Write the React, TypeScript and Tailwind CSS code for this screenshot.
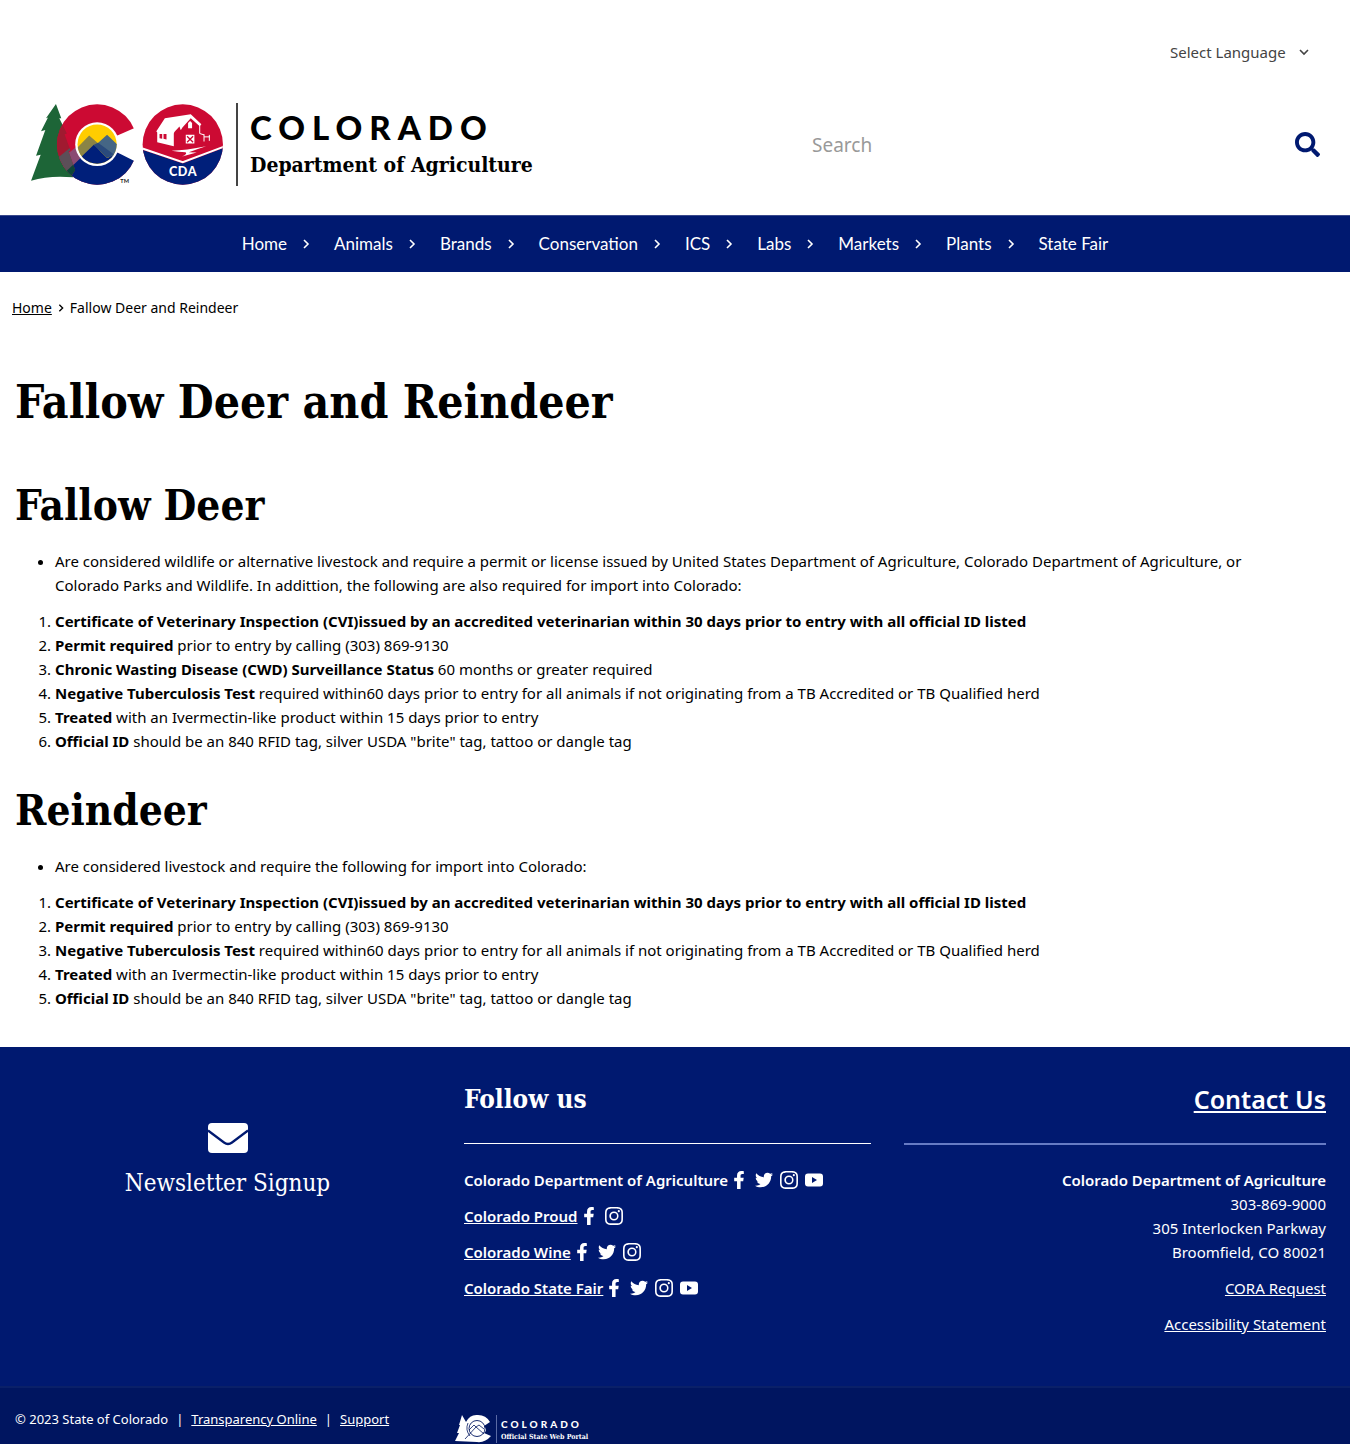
import { FaFacebookF, FaSearch, FaTwitter } from "react-icons/fa";
import { BsInstagram } from "react-icons/bs";

const sans = "font-['Noto_Sans',sans-serif]";
const slab = "font-['DejaVu_Serif_Condensed','DejaVu_Serif',serif]";

function Chevron({ className }: { className: string }) {
  return (
    <svg viewBox="0 0 12 12" className={className} fill="none" stroke="currentColor" strokeWidth="1.6" aria-hidden="true">
      <path d="M4 2l4 4-4 4" />
    </svg>
  );
}

function StateMark() {
  return (
    <svg viewBox="30 38 584 250" className="h-[83px] w-[194px]" role="img" aria-label="Colorado Department of Agriculture emblem">
      <defs>
        <clipPath id="ring">
          <circle cx="232" cy="163" r="121" />
        </clipPath>
        <clipPath id="center">
          <circle cx="232" cy="162" r="59" />
        </clipPath>
        <clipPath id="seal">
          <circle cx="490" cy="163" r="121" />
        </clipPath>
        <clipPath id="tree">
          <path d="M108 41L124 84L118 84L141 130L134 132L152 182L146 184L166 240L152 262Q90 255 33 272L62 194L48 197L76 119L63 123L84 82L78 84z" />
        </clipPath>
      </defs>
      <path d="M108 41L124 84L118 84L141 130L134 132L152 182L146 184L160 262Q90 255 33 272L62 194L48 197L76 119L63 123L84 82L78 84z" fill="#1d6537" />
      <g clipPath="url(#ring)">
        <rect x="100" y="30" width="260" height="270" fill="#cc0a33" />
        <path d="M105 222L182 160L222 150L350 190V300H110z" fill="#8a4a72" />
        <path d="M134 250L222 165L300 190L360 200V300H110z" fill="#001f7a" />
      </g>
      <g clipPath="url(#tree)">
        <g clipPath="url(#ring)">
          <rect x="100" y="30" width="80" height="260" fill="#a01a30" />
          <path d="M105 210L160 165V300H100z" fill="#5c4f58" />
          <path d="M120 262L170 214V300H110z" fill="#0d4638" />
        </g>
      </g>
      <path d="M232 162L300 133L362 106V222L295 188z" fill="#fff" />
      <circle cx="232" cy="162" r="66" fill="#fff" />
      <g clipPath="url(#center)">
        <rect x="170" y="100" width="124" height="124" fill="#ffcd00" />
        <path d="M150 196L208 136L240 164L200 240z" fill="#8a8446" />
        <path d="M222 170L262 134L306 176V225z" fill="#456685" />
        <path d="M160 224L222 164L262 204L300 188V240H160z" fill="#001f7a" />
        <path d="M222 164L235 158L282 192L262 204z" fill="#2a4a7c" />
      </g>
      <text x="302" y="280" fontSize="17" className="font-['Lato',sans-serif] font-bold" fill="#222">TM</text>
      <g clipPath="url(#seal)">
        <rect x="365" y="38" width="250" height="250" fill="#cc0a33" />
        <path d="M365 178L490 220L615 173V290H365z" fill="#001f7a" />
        <path d="M365 174L490 216L615 169" fill="none" stroke="#fff" strokeWidth="6" />
      </g>
      <path d="M410 124L436 84L514 72L546 102L541 108L514 84L489 112L484 120L480 109L466 124L462 130L415 127z" fill="#fff" />
      <path d="M413 122L463 126V168L413 156z" fill="#fff" />
      <path d="M420 131h8v15l-8-2zM432 131h9v17l-9-2z" fill="#cc0a33" />
      <path d="M506 98l6-6 6 6v16h-12zM499 134h26v26h-26z" fill="#fff" />
      <path d="M503 138l18 18M521 138l-18 18" stroke="#cc0a33" strokeWidth="4" />
      <path d="M541 104V130L554 134M554 132V154M570 134V152M554 140H572" fill="none" stroke="#fff" strokeWidth="3" />
      <path d="M456 182Q500 180 560 168Q530 178 508 186L532 187L488 199Q506 190 498 186Q478 186 456 182z" fill="#fff" />
      <text x="491" y="257" textAnchor="middle" fontSize="38" letterSpacing="2" className="font-['Lato',sans-serif] font-black" fill="#fff">CDA</text>
    </svg>
  );
}

function PortalMark() {
  return (
    <svg viewBox="0 0 37 29" className="h-[29px] w-[37px]" aria-hidden="true">
      <path d="M7 1L11 8Q15 0 23 1Q31 1 35 8L29 12Q33 16 29 19L36 22Q30 29 22 28L0 27L4 19L2 19L5 11L4 11z" fill="#fff" />
      <circle cx="22" cy="14.500" r="8" fill="none" stroke="#001560" strokeWidth="0.9" />
      <path d="M10 25L21 13L29 20M14 16L19 11L21 13L24 11L29 15M13 9Q10 16 15 22" fill="none" stroke="#001560" strokeWidth="0.8" />
    </svg>
  );
}

function YouTube() {
  return (
    <svg viewBox="0 0 18 18" className="size-[18px]" aria-hidden="true">
      <path fillRule="evenodd" fill="currentColor" d="M3 2.500h12q3 0 3 3v7q0 3-3 3H3q-3 0-3-3v-7q0-3 3-3zM7 6v6l5-3z" />
    </svg>
  );
}

const nav = ["Home", "Animals", "Brands", "Conservation", "ICS", "Labs", "Markets", "Plants", "State Fair"];

const icons: Record<string, React.ReactNode> = {
  Facebook: <FaFacebookF className="size-[18px]" />,
  Twitter: <FaTwitter className="size-[18px]" />,
  Instagram: <BsInstagram className="size-[18px]" />,
  YouTube: <YouTube />,
};

const social = [
  { name: "Colorado Department of Agriculture", link: false, on: ["Facebook", "Twitter", "Instagram", "YouTube"] },
  { name: "Colorado Proud", link: true, on: ["Facebook", "Instagram"] },
  { name: "Colorado Wine", link: true, on: ["Facebook", "Twitter", "Instagram"] },
  { name: "Colorado State Fair", link: true, on: ["Facebook", "Twitter", "Instagram", "YouTube"] },
];

const certificate = ["Certificate of Veterinary Inspection (CVI)issued by an accredited veterinarian within 30 days prior to entry with all official ID listed", ""];
const permit = ["Permit required", " prior to entry by calling (303) 869-9130"];
const wasting = ["Chronic Wasting Disease (CWD) Surveillance Status", " 60 months or greater required"];
const tuberculosis = ["Negative Tuberculosis Test", " required within60 days prior to entry for all animals if not originating from a TB Accredited or TB Qualified herd"];
const treated = ["Treated", " with an Ivermectin-like product within 15 days prior to entry"];
const officialId = ["Official ID", " should be an 840 RFID tag, silver USDA \"brite\" tag, tattoo or dangle tag"];

function Section({ title, intro, items }: { title: string; intro: string; items: string[][] }) {
  return (
    <section className="mb-8">
      <h2 className={`${slab} text-[42px] leading-[52px] font-bold`}>{title}</h2>
      <ul className="mt-[17px] list-disc px-10">
        <li>{intro}</li>
      </ul>
      <ol className="mt-3 list-decimal pl-10">
        {items.map(([strong, rest]) => (
          <li key={strong}>
            <strong className="font-bold">{strong}</strong>
            {rest}
          </li>
        ))}
      </ol>
    </section>
  );
}

export default function App() {
  return (
    <div className={`${sans} bg-white text-[15px] leading-6 text-black`}>
      <header>
        <div className="flex justify-end pt-9 pr-10">
          <div className="relative flex h-8 items-center text-[#444]">
            <select aria-label="Language" className="h-8 w-[140px] appearance-none bg-transparent leading-8 outline-none">
              <option>Select Language</option>
            </select>
            <Chevron className="pointer-events-none absolute right-0 size-3 rotate-90" />
          </div>
        </div>
        <div className="flex items-center justify-between pt-[35px] pr-[30px] pb-[29px] pl-[30px]">
          <a href="#" className="flex h-[83px] items-center">
            <StateMark />
            <span className="ml-3 flex h-full flex-col border-l-2 border-[#444] pl-3 text-black">
              <span className="mt-1 font-['Lato',sans-serif] text-[33px] leading-10 font-black tracking-[7px]">COLORADO</span>
              <span className={`${slab} text-[21px] leading-9 font-bold`}>Department of Agriculture</span>
            </span>
          </a>
          <form className="flex w-[508px] items-center" role="search">
            <input type="search" aria-label="Search" placeholder="Search" className="min-w-0 flex-1 text-[19px] outline-none placeholder:text-[#999]" />
            <button type="button" aria-label="Submit search" className="text-[#001970]">
              <FaSearch className="size-[25px]" />
            </button>
          </form>
        </div>
        <nav className="flex h-[57px] items-center justify-center border-t border-[#39498c] bg-[#001970] font-['Lato',sans-serif] text-[17px] text-white">
          {nav.map((item, i) => (
            <div key={item} className="flex items-center">
              <a href="#">{item}</a>
              {i < nav.length - 1 && (
                <button type="button" aria-label={`Open ${item} menu`} className="mr-[22px] ml-[13px]">
                  <Chevron className="size-3" />
                </button>
              )}
            </div>
          ))}
        </nav>
      </header>

      <nav aria-label="Breadcrumb" className="flex items-center px-3 pt-6 text-[14px]">
        <a href="#" className="underline">Home</a>
        <Chevron className="mx-1 size-[10px]" />
        <span>Fallow Deer and Reindeer</span>
      </nav>
      <main className="px-[15px] pt-[50px] pb-[5px]">
        <h1 className={`${slab} mb-[46px] text-[46px] leading-[64px] font-bold`}>Fallow Deer and Reindeer</h1>
        <Section
          title="Fallow Deer"
          intro="Are considered wildlife or alternative livestock and require a permit or license issued by United States Department of Agriculture, Colorado Department of Agriculture, or Colorado Parks and Wildlife. In addittion, the following are also required for import into Colorado:"
          items={[certificate, permit, wasting, tuberculosis, treated, officialId]}
        />
        <Section
          title="Reindeer"
          intro="Are considered livestock and require the following for import into Colorado:"
          items={[certificate, permit, tuberculosis, treated, officialId]}
        />
      </main>

      <footer className="bg-[#001970] text-white">
        <div className="grid grid-cols-[455fr_416fr_455fr] pt-8 pr-6 pb-[50px]">
          <div className="flex flex-col items-center pt-11">
            <a href="#" className="flex flex-col items-center">
              <svg viewBox="0 0 40 30" className="h-[30px] w-10" aria-hidden="true">
                <rect width="40" height="30" rx="4" fill="#fff" />
                <path d="M0 7.500L16 19.500Q20 22.500 24 19.500L40 7.500" fill="none" stroke="#001970" strokeWidth="2.200" />
              </svg>
              <span className={`${slab} mt-3 text-[24px] leading-9`}>Newsletter Signup</span>
            </a>
          </div>
          <div className="pl-[9px]">
            <h2 className={`${slab} text-[26px] leading-10 font-bold`}>Follow us</h2>
            <hr className="my-6 border-white" />
            <ul className="space-y-3 font-semibold">
              {social.map((s) => (
                <li key={s.name} className="flex items-center gap-0.5">
                  {s.link ? <a href="#" className="underline">{s.name}</a> : <span>{s.name}</span>}
                  <span className="flex items-center gap-[7px]">
                    {s.on.map((n) => (
                      <a key={n} href="#" aria-label={`${s.name} on ${n}`}>{icons[n]}</a>
                    ))}
                  </span>
                </li>
              ))}
            </ul>
          </div>
          <div className="pl-[33px] text-right">
            <h2 className="text-[25px] leading-10 font-semibold">
              <a href="#" className="underline">Contact Us</a>
            </h2>
            <hr className="mt-6 mb-[23px] border-t-2 border-[#667bc4]" />
            <address className="not-italic">
              <strong className="font-semibold">Colorado Department of Agriculture</strong>
              <br />303-869-9000
              <br />305 Interlocken Parkway
              <br />Broomfield, CO 80021
            </address>
            <p className="mt-3"><a href="#" className="underline">CORA Request</a></p>
            <p className="mt-3"><a href="#" className="underline">Accessibility Statement</a></p>
          </div>
        </div>
        <div className="grid grid-cols-[455fr_895fr] border-t-2 border-[#0a2068] bg-[#001560]">
          <p className="flex gap-2 pt-[19px] pl-[15px] text-[13px]">
            <span>© 2023 State of Colorado</span>
            <span>|</span>
            <a href="#" className="underline">Transparency Online</a>
            <span>|</span>
            <a href="#" className="underline">Support</a>
          </p>
          <a href="#" className="flex items-center pt-[26px] pb-px">
            <PortalMark />
            <span className="ml-1 flex h-7 flex-col justify-center border-l border-[#5a6aa5] pl-1">
              <span className="font-['Lato',sans-serif] text-[10px] leading-4 font-black tracking-[3px]">COLORADO</span>
              <span className={`${slab} text-[7px] leading-[9px] font-bold`}>Official State Web Portal</span>
            </span>
          </a>
        </div>
      </footer>
    </div>
  );
}
